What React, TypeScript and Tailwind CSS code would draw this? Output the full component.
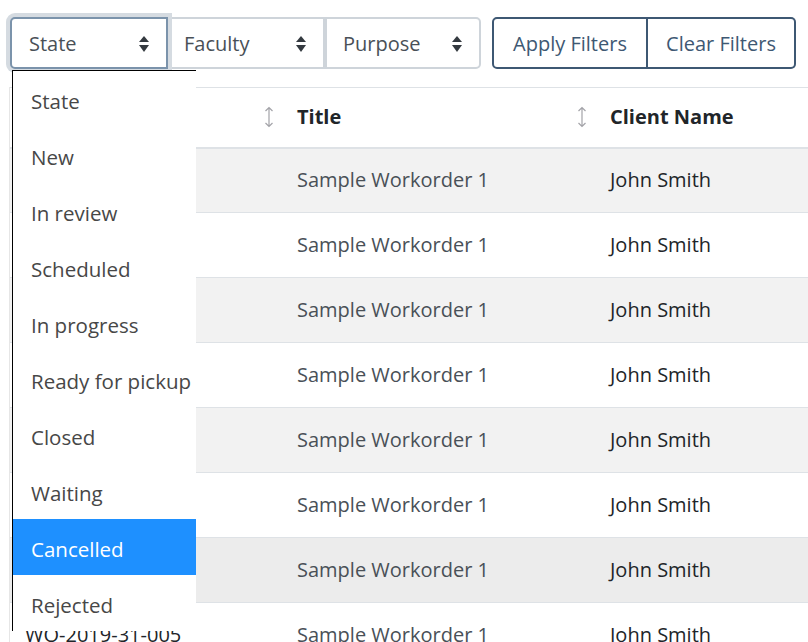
import React from 'react';

const font = { fontFamily: '"Open Sans", "Noto Sans", "Liberation Sans", sans-serif' };

const Caret = () => (
  <svg width="10" height="16" viewBox="0 0 10 16" className="shrink-0">
    <path d="M5 0 L10 6 L0 6 Z" fill="#343a40" />
    <path d="M0 9 L10 9 L5 16 Z" fill="#343a40" />
  </svg>
);

const SortIcon = () => (
  <svg width="10" height="22" viewBox="0 0 10 22" className="shrink-0">
    <path d="M5 1.5 V20.5 M1.5 5 L5 1.5 L8.5 5 M1.5 17 L5 20.5 L8.5 17" fill="none" stroke="#a3a3a8" strokeWidth="1.2" />
  </svg>
);

const states = ['State', 'New', 'In review', 'Scheduled', 'In progress', 'Ready for pickup', 'Closed', 'Waiting', 'Cancelled', 'Rejected'];

const rows = [
  'WO-2019-31-012',
  'WO-2019-31-011',
  'WO-2019-31-010',
  'WO-2019-31-009',
  'WO-2019-31-008',
  'WO-2019-31-007',
  'WO-2019-31-006',
  'WO-2019-31-005',
  'WO-2019-31-004',
];

export default function App() {
  return (
    <div className="relative h-[642px] w-[808px] overflow-hidden bg-white text-[20px]" style={font}>
      <div className="pl-[10px] pt-[17px]">
        {/* Filters */}
        <div className="flex items-start">
          <div className="flex">
            <div className="relative z-10 flex h-[52px] w-[158px] items-center justify-between rounded-l-[5px] border-2 border-[#7b93ab] bg-white pl-[17px] pr-[17px] pt-[2px] text-[#495057] shadow-[0_0_0_4px_#d5dbe1]">
              <span>State</span>
              <Caret />
            </div>
            <div className="flex h-[52px] w-[157px] items-center justify-between border-2 border-l-0 border-[#ced4da] pl-[16px] pr-[17px] pt-[2px] text-[#495057]">
              <span>Faculty</span>
              <Caret />
            </div>
            <div className="flex h-[52px] w-[156px] items-center justify-between rounded-r-[5px] border-2 border-[#ced4da] pl-[16px] pr-[17px] pt-[2px] text-[#495057]">
              <span>Purpose</span>
              <Caret />
            </div>
          </div>
          <div className="ml-[11px] flex">
            <button className="flex h-[52px] w-[156px] items-center justify-center rounded-l-[5px] border-2 border-[#3e5873] pt-[1px] text-[#3e5873]">
              Apply Filters
            </button>
            <button className="flex h-[52px] w-[148px] items-center justify-center rounded-r-[5px] border-2 border-l-0 border-[#3e5873] pt-[1px] text-[#3e5873]">
              Clear Filters
            </button>
          </div>
        </div>

        {/* Table */}
        <div className="mt-[18px] ml-[-1px] w-[900px] border-l border-[#e6e6e6]">
          <table className="w-full table-fixed border-collapse">
            <colgroup>
              <col className="w-[272px]" />
              <col className="w-[313px]" />
              <col />
            </colgroup>
            <thead>
              <tr className="h-[60px] border-t border-b-2 border-[#dee2e6]">
                <th className="pl-[15px] pr-[8px] text-left font-bold text-[#212529]">
                  <div className="flex items-center justify-between">
                    <span>Number</span>
                    <SortIcon />
                  </div>
                </th>
                <th className="pl-[15px] pr-[8px] text-left font-bold text-[#212529]">
                  <div className="flex items-center justify-between">
                    <span>Title</span>
                    <SortIcon />
                  </div>
                </th>
                <th className="pl-[15px] text-left font-bold text-[#212529]">Client Name</th>
              </tr>
            </thead>
            <tbody>
              {rows.map((id, i) => (
                <tr
                  key={id}
                  className={`h-[65px] border-t border-[#dee2e6] ${i === 6 ? 'bg-[#ececec]' : i % 2 === 0 ? 'bg-[#f2f2f2]' : 'bg-white'}`}
                >
                  <td className="pl-[15px] text-[#212529]">{id}</td>
                  <td className="pl-[15px] text-[#495057]">Sample Workorder 1</td>
                  <td className="pl-[15px] text-[#212529]">John Smith</td>
                </tr>
              ))}
            </tbody>
          </table>
        </div>
      </div>

      {/* Open state dropdown */}
      <div className="absolute left-[12px] top-[70px] z-20 w-[184px] border-l border-t border-black bg-white">
        {states.map((s) => (
          <div
            key={s}
            className={`flex h-[56px] items-center whitespace-nowrap pl-[18px] pt-[4px] text-[20.5px] ${s === 'Cancelled' ? 'bg-[#1e90ff] text-white' : 'text-[#474747]'}`}
          >
            {s}
          </div>
        ))}
      </div>
    </div>
  );
}
